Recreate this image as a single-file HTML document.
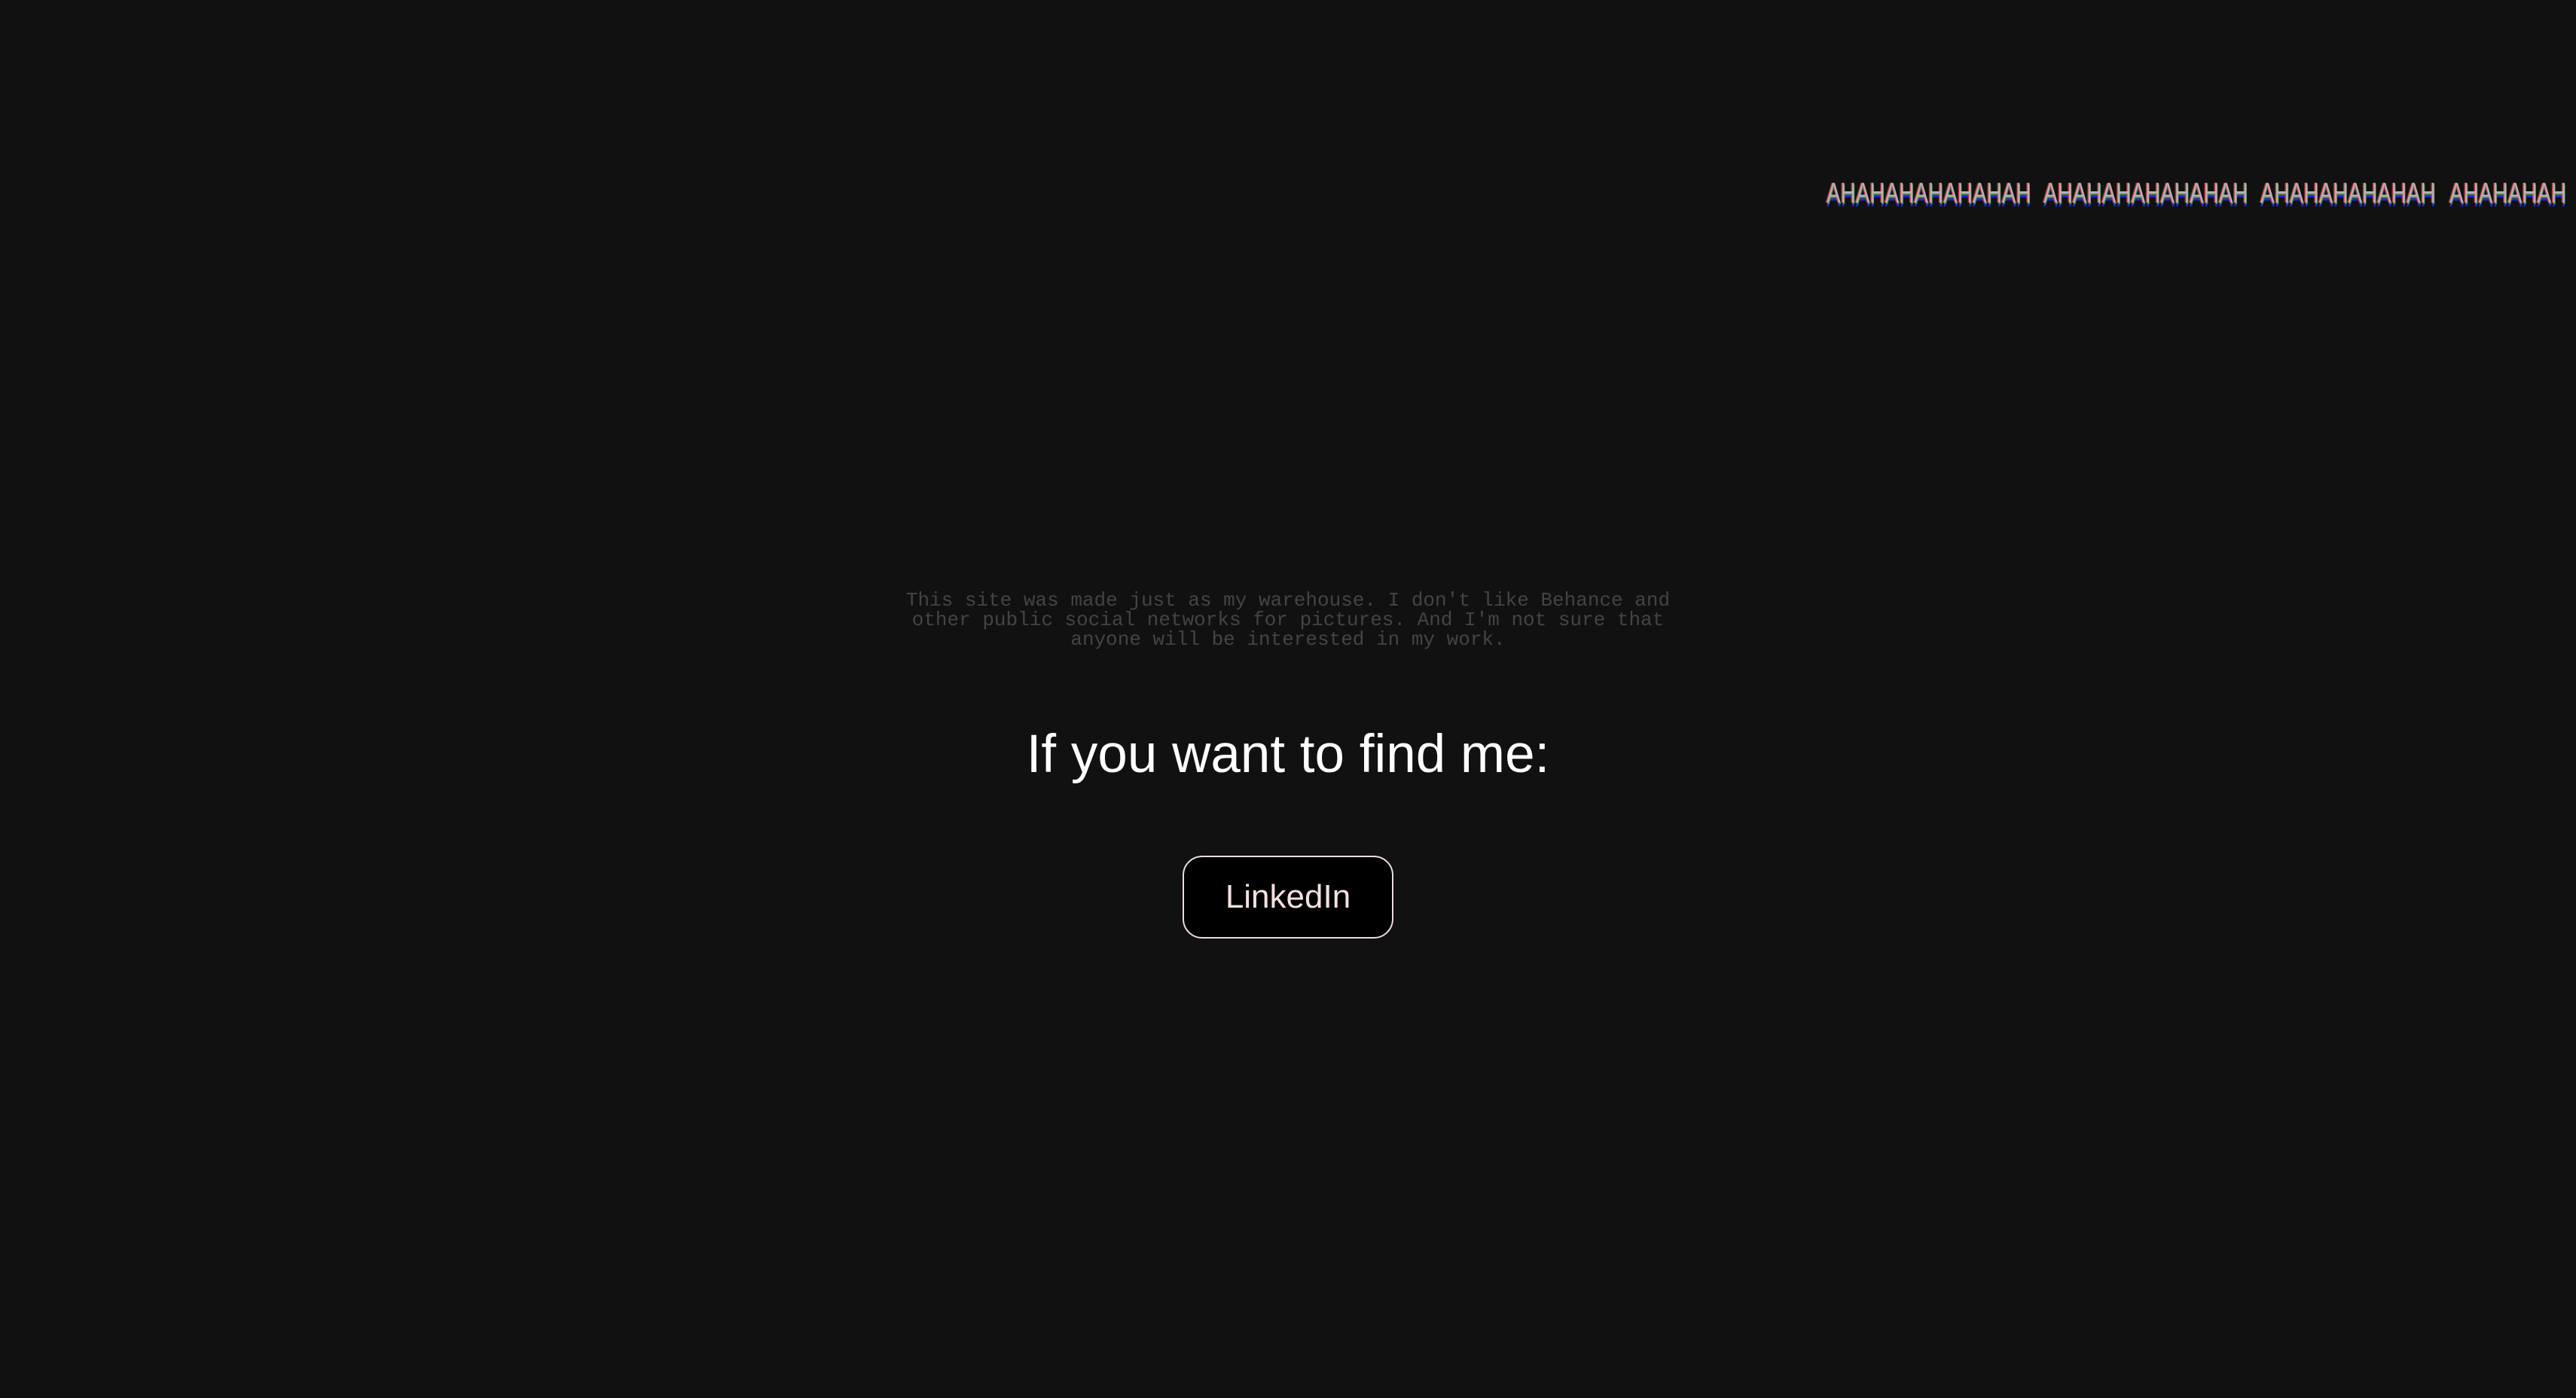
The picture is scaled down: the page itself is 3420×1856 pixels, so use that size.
<!DOCTYPE html>
<html><head><meta charset="utf-8"><style>
html,body{margin:0;padding:0;}
body{width:3420px;height:1856px;background:#111;position:relative;overflow:hidden;}
.ah{position:absolute;top:236px;font-family:"Liberation Sans",sans-serif;font-size:38px;color:#b9b0b0;transform:scaleX(0.735);transform-origin:left top;white-space:nowrap;text-shadow:-2px 0 rgba(220,60,60,.8),1px 2px rgba(70,170,90,.8),0 5px rgba(40,40,230,.9);}
.p{position:absolute;left:1100px;width:1220px;top:784px;text-align:center;font-family:"Liberation Mono",monospace;font-size:26px;line-height:26px;color:#444;}
.h{position:absolute;left:0;width:3420px;top:961px;text-align:center;font-family:"Liberation Sans",sans-serif;font-size:71px;color:#fff;}
.b{position:absolute;left:1570px;top:1136px;width:280px;height:110px;border:2px solid #ecdada;border-radius:26px;background:#000;box-sizing:border-box;}
.b span{position:absolute;left:0;right:0;top:28px;text-align:center;font-family:"Liberation Sans",sans-serif;font-size:44px;color:#f3e0e0;}
</style></head><body>
<div class="ah" style="left:2425px">AHAHAHAHAHAHAH</div>
<div class="ah" style="left:2713px">AHAHAHAHAHAHAH</div>
<div class="ah" style="left:3001px">AHAHAHAHAHAH</div>
<div class="ah" style="left:3252px">AHAHAHAH</div>
<div class="p">This site was made just as my warehouse. I don't like Behance and<br>other public social networks for pictures. And I'm not sure that<br>anyone will be interested in my work.</div>
<div class="h">If you want to find me:</div>
<div class="b"><span>LinkedIn</span></div>
</body></html>
